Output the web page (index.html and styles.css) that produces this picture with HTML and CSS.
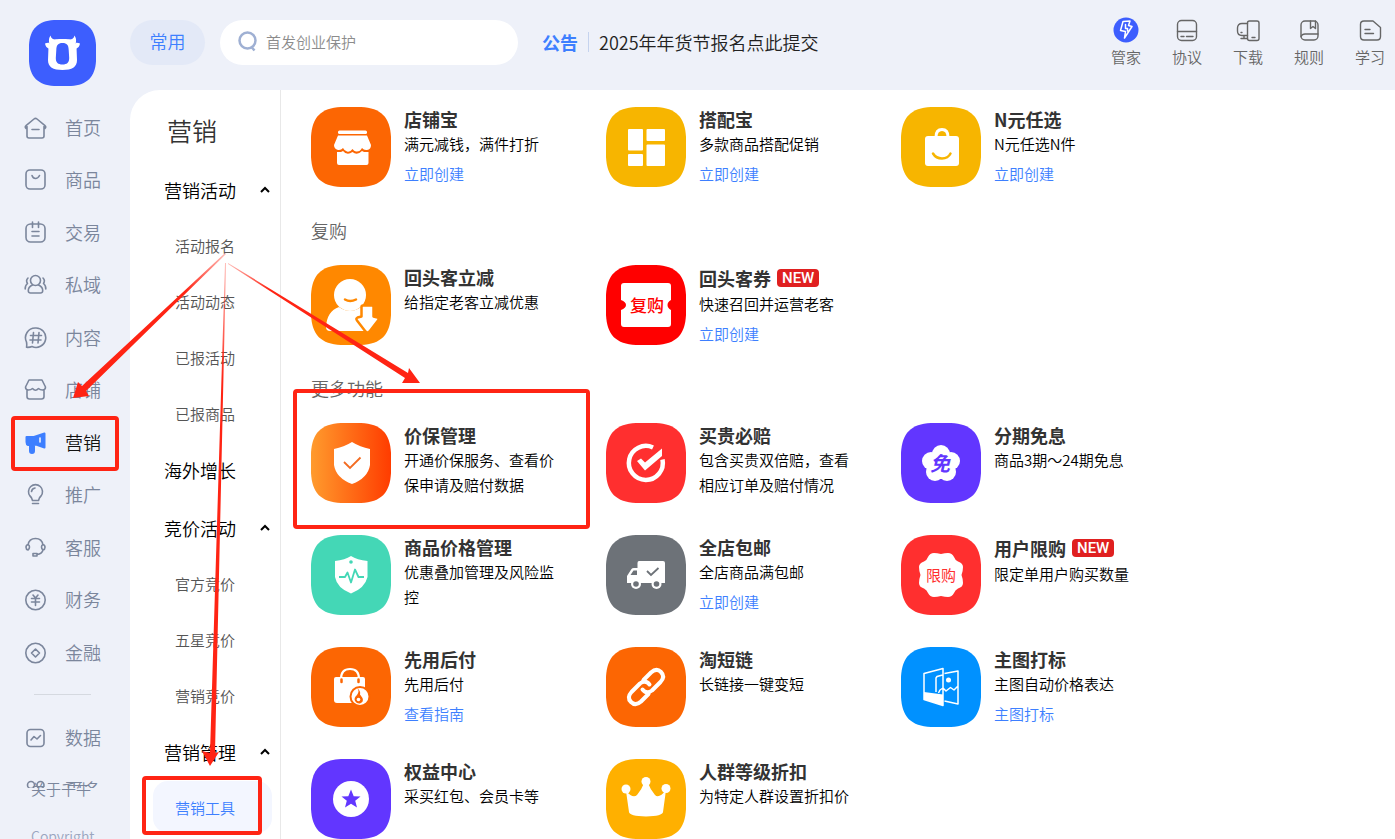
FILE: index.html
```html
<!DOCTYPE html>
<html lang="zh-CN">
<head>
<meta charset="utf-8">
<title>营销工具</title>
<link rel="stylesheet" href="styles.css">
</head>
<body>
<svg class="defs" aria-hidden="true">
  <symbol id="tile" viewBox="0 0 80 80"><path d="M30 0H50C70 1 79 10 80 30V50C79 70 70 79 50 80H30C10 79 1 70 0 50V30C1 10 10 1 30 0Z"/></symbol>
</svg>
<div class="app">
  <aside class="sidebar">
    <a class="logo" href="#" aria-label="千牛">
      <svg viewBox="0 0 67 66"><path fill="#3d5efe" d="M25 0H42C58 1 66 9 67 25V41C66 57 58 65 42 66H25C9 65 1 57 0 41V25C1 9 9 1 25 0Z"/><path fill="#fff" fill-rule="evenodd" d="M33.500 19C43 19 47 20.500 47.500 27L48 40C48 47 43 50 33.500 50S19 47 19 40L19.500 27C20 20.500 24 19 33.500 19ZM33.500 23C29 23 27.500 25 27.300 30L26.800 38C26.800 42.500 29 44.500 33.500 44.500S40.200 42.500 40.200 38L39.700 30C39.500 25 38 23 33.500 23Z"/><path fill="#fff" d="M21.500 15.500Q19 19.500 20.500 23.500L26 24L28 19.800Q22.500 20 21.500 15.500ZM45.500 15.500Q48 19.500 46.500 23.500L41 24L39 19.800Q44.500 20 45.500 15.500ZM16 23.500Q19 22 23 23.500L20.500 29Q16.500 27.500 16 23.500ZM51 23.500Q48 22 44 23.500L46.500 29Q50.500 27.500 51 23.500Z"/></svg>
    </a>
    <nav class="nav" aria-label="主导航">
      <ul class="nav-list">
        <li><a class="nav-item" href="#"><svg class="line-icon" viewBox="0 0 24 24"><path d="M3 10.500V20a2 2 0 0 0 2 2H18a2 2 0 0 0 2-2V10.500M2 12.500C1 11.500 1 10.500 2 9.700L10 3Q11.500 1.800 13 3L21 9.700C22 10.500 22 11.500 21 12.500M8 13.500H15"/></svg>首页</a></li>
        <li><a class="nav-item" href="#"><svg class="line-icon" viewBox="0 0 24 24"><rect x="2" y="2" width="19" height="19" rx="4"/><path d="M8 7.500Q9 10.500 11.500 10.500T15.500 7.500"/></svg>商品</a></li>
        <li><a class="nav-item" href="#"><svg class="line-icon" viewBox="0 0 24 24"><rect x="2" y="3" width="19" height="18" rx="4.500"/><path d="M8.500 1V6.500M14.500 1V6.500M8 10.500H15M8 15H15"/></svg>交易</a></li>
        <li><a class="nav-item" href="#"><svg class="line-icon" viewBox="0 0 24 24"><circle cx="11.500" cy="7.500" r="5"/><path d="M8.500 12Q4 14 4.300 18Q4.500 20 6.500 20H16.500Q18.500 20 18.700 18Q19 14 14.500 12M4 5Q1.500 7.500 3.500 10.500Q1 12.500 1.200 16M19 5Q21.500 7.500 19.500 10.500Q22 12.500 21.800 16"/></svg>私域</a></li>
        <li><a class="nav-item" href="#"><svg class="line-icon" viewBox="0 0 24 24"><path d="M11.500 2A9.700 9.700 0 1 1 8 20.500Q6 21.500 2.500 21.300Q3 19 2.500 16A9.700 9.700 0 0 1 11.500 2ZM9.500 6.500L8.500 17M15 6.500L14 17M6.500 9.500H17.500M6 14H17"/></svg>内容</a></li>
        <li><a class="nav-item" href="#"><svg class="line-icon" viewBox="0 0 24 24"><path d="M5 2H18L21.500 9Q21.500 12 18.500 12Q16 12 14.500 10.500Q11.500 14 8.500 10.500Q7 12 4.500 12Q1.500 12 1.500 9ZM3 12V18.500Q3 21 5.500 21H17.500Q20 21 20 18.500V12"/></svg>店铺</a></li>
        <li><a class="nav-item current" href="#" aria-current="page"><svg class="line-icon" viewBox="0 0 24 24"><path fill="#3d7fff" stroke="#3d7fff" stroke-width="2" d="M2.500 6H10L20.500 2.500V16.500L12 13.500L10 14V20Q10 22 8 22T6 20V14H4Q2.500 13.500 2.500 11Z"/><path stroke="#eef1f9" d="M16 7V11"/></svg>营销</a></li>
        <li><a class="nav-item" href="#"><svg class="line-icon" viewBox="0 0 24 24"><path d="M8.500 17.500Q8 14.500 6 13A7 7 0 1 1 17 13Q15 14.500 14.500 17.500ZM8.500 20.500H14.500M7.500 8.500Q8 5.500 11 5"/></svg>推广</a></li>
        <li><a class="nav-item" href="#"><svg class="line-icon" viewBox="0 0 24 24"><path d="M4 9Q5 2.500 11.500 2.500T19 9M4 8.500Q5.500 9 5.500 11T4 14Q2 13.500 2 11.200T4 8.500ZM19 8.500Q17.500 9 17.500 11T19 14Q21 13.500 21 11.200T19 8.500ZM19 14Q18 18 13 18.500M9 17.500H13V20H9Z"/></svg>客服</a></li>
        <li><a class="nav-item" href="#"><svg class="line-icon" viewBox="0 0 24 24"><circle cx="11.500" cy="12" r="9.700"/><path d="M9 7L11.500 10L14 7M7.500 10.500H15.500M7.500 14H15.500M11.500 10.500V17.500"/></svg>财务</a></li>
        <li><a class="nav-item" href="#"><svg class="line-icon" viewBox="0 0 24 24"><circle cx="11.500" cy="12" r="9.700"/><path d="M11.500 8L15.500 12L11.500 16L7.500 12Z"/></svg>金融</a></li>
      </ul>
      <hr class="nav-rule">
      <ul class="nav-extra">
        <li><a class="nav-item" href="#"><svg class="line-icon" viewBox="0 0 24 24"><rect x="3" y="3.500" width="17" height="17" rx="3.500"/><path d="M7 14L10 10.500L13 13L16.500 9.500"/></svg>数据</a></li>
        <li><a class="nav-item" href="#"><svg class="line-icon" viewBox="0 0 24 24"><circle cx="7" cy="7" r="3.500"/><circle cx="16.500" cy="7" r="3.500"/><circle cx="7" cy="17" r="3.500"/><circle cx="16.500" cy="17" r="3.500"/></svg>更多</a></li>
      </ul>
    </nav>
    <footer class="side-foot"><a href="#">关于千牛</a><small>Copyright</small></footer>
  </aside>

  <header class="topbar">
    <button class="common" type="button">常用</button>
    <label class="search">
      <svg viewBox="0 0 20 22"><circle cx="9.500" cy="9.500" r="8" fill="none" stroke="#9fb0d3" stroke-width="2.500"/><path d="M13 15.500L16.500 19.500" stroke="#9fb0d3" stroke-width="2.500"/></svg>
      <input type="search" placeholder="首发创业保护" aria-label="搜索">
    </label>
    <div class="notice"><strong>公告</strong><a href="#">2025年年货节报名点此提交</a></div>
    <nav class="tools" aria-label="快捷入口">
      <a href="#"><svg viewBox="0 0 26 26"><circle cx="13" cy="13" r="12.500" fill="#3d5efe"/><path fill="none" stroke="#fff" stroke-width="1.500" stroke-linejoin="round" d="M10 4.500L17 4L15.500 8.500L19 9.500L11.500 21L12.500 14.500L7.500 13.500ZM12.500 7.500V11.500H14.500V14"/></svg>管家</a>
      <a href="#"><svg viewBox="0 0 26 26"><rect x="3.500" y="3.500" width="19" height="20" rx="4"/><path d="M3.500 14.500H22.500M7 19.500H10M12.500 19.500H19"/></svg>协议</a>
      <a href="#"><svg viewBox="0 0 26 26"><path d="M12.500 6.500H7Q2.500 6.500 2.500 11V14Q2.500 18.500 7 18.500H12.500M6 21.500H12.500M9 18.500V21M6 15.500H7"/><rect x="12.500" y="4" width="11.500" height="19.500" rx="2"/><path d="M17 20.500H20"/></svg>下载</a>
      <a href="#"><svg viewBox="0 0 26 26"><rect x="5" y="4" width="17" height="19" rx="4"/><path d="M5 19.500Q6 17 9 17H22M14.500 4V11.500L17 9.500L19.500 11.500V4"/></svg>规则</a>
      <a href="#"><svg viewBox="0 0 26 26"><path d="M7 4H16L23.500 10.500V19.500Q23.500 23 20 23H7Q3.500 23 3.500 19.500V7.500Q3.500 4 7 4ZM8 12.500H13M8 16.500H16.500"/></svg>学习</a>
    </nav>
  </header>

  <div class="workspace">
    <nav class="submenu" aria-label="营销">
      <h1>营销</h1>
      <button class="group" type="button" aria-expanded="true">营销活动<svg viewBox="0 0 10 8"><path d="M1 6L5 2L9 6"/></svg></button>
      <ul>
        <li><a href="#">活动报名</a></li>
        <li><a href="#">活动动态</a></li>
        <li><a href="#">已报活动</a></li>
        <li><a href="#">已报商品</a></li>
      </ul>
      <a class="group" href="#">海外增长</a>
      <button class="group" type="button" aria-expanded="true">竞价活动<svg viewBox="0 0 10 8"><path d="M1 6L5 2L9 6"/></svg></button>
      <ul>
        <li><a href="#">官方竞价</a></li>
        <li><a href="#">五星竞价</a></li>
        <li><a href="#">营销竞价</a></li>
      </ul>
      <button class="group" type="button" aria-expanded="true">营销管理<svg viewBox="0 0 10 8"><path d="M1 6L5 2L9 6"/></svg></button>
      <ul>
        <li><a class="selected" href="#" aria-current="page">营销工具</a></li>
      </ul>
    </nav>

    <main class="content">
      <section class="cards">
        <article class="card">
          <svg class="tile" viewBox="0 0 80 80"><use href="#tile" fill="#fc6603"/><g fill="#fff"><rect x="27" y="23.500" width="29" height="3.500" rx="1.500"/><path d="M27 28.500H56L60 38Q60 42.500 56 43Q53 43.500 51 41Q49 45 45 44.500Q43 44 41.500 42Q39 45.500 36 44.500Q33.500 44 32 41Q30 43.500 27 43Q23 42 23 38Z"/><path d="M26 45H30L32 44Q36 49 41.500 45Q46 49 51 44L53 45H57.500V56Q57.500 58 55.500 58H28Q26 58 26 56Z"/></g></svg>
          <div class="copy"><h3>店铺宝</h3><p>满元减钱，满件打折</p><a href="#">立即创建</a></div>
        </article>
        <article class="card">
          <svg class="tile" viewBox="0 0 80 80"><use href="#tile" fill="#f7b500"/><g fill="#fff"><rect x="22" y="22" width="15" height="21.500" rx="1"/><rect x="40.500" y="22" width="18.500" height="12" rx="1"/><rect x="22" y="47" width="15" height="12" rx="1"/><rect x="40.500" y="37.500" width="18.500" height="21.500" rx="1"/></g></svg>
          <div class="copy"><h3>搭配宝</h3><p>多款商品搭配促销</p><a href="#">立即创建</a></div>
        </article>
        <article class="card">
          <svg class="tile" viewBox="0 0 80 80"><use href="#tile" fill="#f7b500"/><rect x="24" y="29" width="34" height="30" rx="3" fill="#fff"/><path fill="none" stroke="#fff" stroke-width="3" d="M35 30Q35 22.500 41 22.500T47 30"/><path fill="none" stroke="#f7b500" stroke-width="2.500" stroke-linecap="round" d="M32 46.500Q35 51.500 41 51.500T49.500 46.500"/></svg>
          <div class="copy"><h3>N元任选</h3><p>N元任选N件</p><a href="#">立即创建</a></div>
        </article>
      </section>

      <h2>复购</h2>
      <section class="cards">
        <article class="card">
          <svg class="tile" viewBox="0 0 80 80"><use href="#tile" fill="#ff8800"/><circle cx="39" cy="30" r="16" fill="#fff"/><path fill="#fff" d="M15 62Q16 46 28 42Q39 50 50 42L57 50V66H19Q15 66 15 62Z"/><path fill="none" stroke="#ff8800" stroke-width="2.500" stroke-linecap="round" d="M34 34.500Q39 37.500 45 34.500"/><path fill="#fff" stroke="#ff8800" stroke-width="2.500" stroke-linejoin="round" d="M52 40.500H61Q62.500 40.500 62.500 42V51.500L66.500 52.500Q68.500 53.500 67 55.500L58.500 66.500Q56.500 68.500 54.500 66.500L46 55.500Q44.500 53.500 46.500 52.500L50.500 51.500V42Q50.500 40.500 52 40.500Z"/></svg>
          <div class="copy"><h3>回头客立减</h3><p>给指定老客立减优惠</p></div>
        </article>
        <article class="card">
          <svg class="tile" viewBox="0 0 80 80"><use href="#tile" fill="#ff0000"/><path fill="#fff" d="M18 18H62Q65 18 65 21V35Q61.500 37 61.500 40T65 45V59Q65 62 62 62H18Q15 62 15 59V45Q20 43 20 40T15 35V21Q15 18 18 18Z"/><text class="tile-text big" x="41" y="47" fill="#ff0000">复购</text></svg>
          <div class="copy"><h3>回头客券<span class="badge">NEW</span></h3><p>快速召回并运营老客</p><a href="#">立即创建</a></div>
        </article>
      </section>

      <h2>更多功能</h2>
      <section class="cards">
        <article class="card">
          <svg class="tile" viewBox="0 0 80 80"><defs><linearGradient id="ember"><stop stop-color="#ff9b2d"/><stop offset="1" stop-color="#ff3c00"/></linearGradient></defs><use href="#tile" fill="url(#ember)"/><path fill="#fff" d="M41 19Q49 24 59 26V42Q57 55 41 61Q25 55 23 42V26Q33 24 41 19Z"/><path fill="none" stroke="#f36b21" stroke-width="1.800" d="M33 39L39 45L49.500 34.500"/></svg>
          <div class="copy"><h3>价保管理</h3><p>开通价保服务、查看价保申请及赔付数据</p></div>
        </article>
        <article class="card">
          <svg class="tile" viewBox="0 0 80 80"><use href="#tile" fill="#ff2f2f"/><path fill="none" stroke="#fff" stroke-width="4.500" d="M47 24.500A17 17 0 1 0 56.500 36.500"/><path fill="#fff" d="M31 38L35 35.500L39 39.500L56 25.500V33L39 47.500Z"/></svg>
          <div class="copy"><h3>买贵必赔</h3><p>包含买贵双倍赔，查看相应订单及赔付情况</p></div>
        </article>
        <article class="card">
          <svg class="tile" viewBox="0 0 80 80"><use href="#tile" fill="#6236ff"/><g fill="#fff"><circle cx="40" cy="31" r="9"/><circle cx="50" cy="38" r="9"/><circle cx="46" cy="49" r="9"/><circle cx="34" cy="49" r="9"/><circle cx="30" cy="38" r="9"/><circle cx="40" cy="41" r="9"/></g><text class="tile-text mian" x="39" y="48" fill="#6236ff">免</text></svg>
          <div class="copy"><h3>分期免息</h3><p>商品3期～24期免息</p></div>
        </article>
        <article class="card">
          <svg class="tile" viewBox="0 0 80 80"><use href="#tile" fill="#44d7b6"/><path fill="#fff" d="M40 21Q46 25 56.500 26V42Q54 53 40 58.500Q26 53 24 42V26Q34 25 40 21Z"/><circle cx="40" cy="27" r="1.800" fill="#44d7b6"/><path fill="none" stroke="#44d7b6" stroke-width="1.800" stroke-linejoin="round" d="M28 42H34L36.500 37.500L40 47.500L44 34.500L47.500 42H53"/></svg>
          <div class="copy"><h3>商品价格管理</h3><p>优惠叠加管理及风险监控</p></div>
        </article>
        <article class="card">
          <svg class="tile" viewBox="0 0 80 80"><use href="#tile" fill="#6d7278"/><path fill="#fff" d="M33 26H57Q59 26 59 28V48H21V41L25.500 34Q26 33 28 33H31.500V28Q31.500 26 33 26Z"/><path fill="#6d7278" d="M24.500 40L27.500 35.500H31V40Z"/><g fill="#fff"><circle cx="30" cy="49" r="5"/><circle cx="50.500" cy="49" r="5"/></g><g fill="#6d7278"><circle cx="30" cy="49" r="2.800"/><circle cx="50.500" cy="49" r="2.800"/></g><path fill="none" stroke="#6d7278" stroke-width="1.800" d="M41 36L45 40L52.500 33"/></svg>
          <div class="copy"><h3>全店包邮</h3><p>全店商品满包邮</p><a href="#">立即创建</a></div>
        </article>
        <article class="card">
          <svg class="tile" viewBox="0 0 80 80"><use href="#tile" fill="#ff2f2f"/><path fill="#fff" d="M33 18Q36 18 40 19Q44 18 47 18Q51 18 53 22Q54 25 57 26.500Q62 28 62 32Q62 36 60.500 40Q62 44 62 48Q62 52 57 53.500Q54 55 53 58Q51 62 47 62Q44 62 40 61Q36 62 33 62Q29 62 27 58Q26 55 23 53.500Q18 52 18 48Q18 44 19.500 40Q18 36 18 32Q18 28 23 26.500Q26 25 27 22Q29 18 33 18Z"/><text class="tile-text" x="40" y="46" fill="#ff2f2f">限购</text></svg>
          <div class="copy"><h3>用户限购<span class="badge">NEW</span></h3><p>限定单用户购买数量</p></div>
        </article>
        <article class="card">
          <svg class="tile" viewBox="0 0 80 80"><use href="#tile" fill="#fc6603"/><path fill="#fff" d="M25 30H52Q54 30 54 32V56H26Q23 56 23 53V32Q23 30 25 30Z"/><path fill="none" stroke="#fff" stroke-width="2.200" d="M30 32Q30 22 39 22T48 32"/><path stroke="#fc6603" stroke-width="2.500" stroke-linecap="round" d="M30.500 32.500V35M47.500 32.500V35"/><circle cx="49" cy="49.500" r="9.500" fill="#fff" stroke="#fc6603" stroke-width="2"/><path fill="#fc6603" d="M46 41Q49 44 46 48Q42.500 51 44 54Q46 57 49 56.500Q53 55 51.500 51L49 47.500Q50 44 46 41Z"/><circle cx="47.500" cy="52.500" r="1.800" fill="#fff"/></svg>
          <div class="copy"><h3>先用后付</h3><p>先用后付</p><a href="#">查看指南</a></div>
        </article>
        <article class="card">
          <svg class="tile" viewBox="0 0 80 80"><use href="#tile" fill="#fc6603"/><g fill="none" stroke="#fff" stroke-width="4" stroke-linecap="round" stroke-linejoin="round"><path d="M37.500 33L45 25.500Q50.500 20.500 55 25Q59.500 29.500 54.500 35L46 43.500Q40.500 47.500 36.500 42.500"/><path d="M42.500 47L35 54.500Q29.500 59.500 25 55Q20.500 50.500 25.500 45L34 36.500Q39.500 32.500 43.500 37.500"/></g></svg>
          <div class="copy"><h3>淘短链</h3><p>长链接一键变短</p></div>
        </article>
        <article class="card">
          <svg class="tile" viewBox="0 0 80 80"><use href="#tile" fill="#0091ff"/><g fill="none" stroke="#fff" stroke-width="1.500" stroke-linejoin="round"><path d="M23 26.500L42 21.500V58.500L23 52.500ZM43.500 26.500L57 24V57L43.500 54M35 45V31L36 29.500L41.500 28M37.500 46L39 43L42 41L45 44L49.500 40.500L53 43L57 39"/></g><path fill="#fff" d="M23 45L42 47.500V58.500L23 52.500Z"/><circle cx="47.500" cy="33" r="2.500" fill="#fff"/></svg>
          <div class="copy"><h3>主图打标</h3><p>主图自动价格表达</p><a href="#">主图打标</a></div>
        </article>
        <article class="card">
          <svg class="tile" viewBox="0 0 80 80"><use href="#tile" fill="#6236ff"/><circle cx="40" cy="40" r="18" fill="#fff"/><path fill="#6236ff" d="M40 30.500L42.700 37.200L49.500 37.500L44.200 41.800L46 48.500L40 44.800L34 48.500L35.800 41.800L30.500 37.500L37.300 37.200Z"/></svg>
          <div class="copy"><h3>权益中心</h3><p>采买红包、会员卡等</p></div>
        </article>
        <article class="card">
          <svg class="tile" viewBox="0 0 80 80"><use href="#tile" fill="#ffb000"/><g fill="#fff"><circle cx="20" cy="30" r="4.500"/><circle cx="40" cy="22.500" r="4.500"/><circle cx="60" cy="29.500" r="4.500"/><path d="M20 32Q27 40 31 36Q36 30 38 24H42Q44 30 49 36Q53 40 60 31L57 53Q56.500 57 40 57.500Q23.500 57 23 53Z"/></g></svg>
          <div class="copy"><h3>人群等级折扣</h3><p>为特定人群设置折扣价</p></div>
        </article>
      </section>
    </main>
  </div>
</div>

<svg class="marks" viewBox="0 0 1395 839" aria-hidden="true">
  <defs>
    <linearGradient id="fadeA" gradientUnits="userSpaceOnUse" x1="225" y1="253" x2="185" y2="291"><stop stop-color="#ff2414" stop-opacity=".3"/><stop offset="1" stop-color="#ff2414"/></linearGradient>
    <linearGradient id="fadeB" gradientUnits="userSpaceOnUse" x1="225" y1="263" x2="222" y2="380"><stop stop-color="#ff2414" stop-opacity=".3"/><stop offset="1" stop-color="#ff2414"/></linearGradient>
    <linearGradient id="fadeC" gradientUnits="userSpaceOnUse" x1="228" y1="264" x2="270" y2="290"><stop stop-color="#ff2414" stop-opacity=".3"/><stop offset="1" stop-color="#ff2414"/></linearGradient>
  </defs>
  <path fill="url(#fadeA)" d="M225 253L82 386L78 382L73 398L89 396L86 391L226 254Z"/>
  <path fill="url(#fadeB)" d="M225 263L210 753L202 751L210 766L219 752L215 753L226 263Z"/>
  <path fill="url(#fadeC)" d="M228 263L408 373L409 368L420 383L402 383L405 378L228 264Z"/>
  <g fill="none" stroke="#ff2414" stroke-width="4">
    <rect x="13" y="418" width="104" height="51" rx="2"/>
    <rect x="144" y="778" width="116" height="55" rx="2"/>
    <rect x="295" y="391" width="293" height="136" rx="2"/>
  </g>
</svg>
</body>
</html>
```
FILE: styles.css
```css
* { box-sizing: border-box; }
body {
  margin: 0;
  height: 100vh;
  overflow: hidden;
  background: #eef1f9;
  color: #000;
  font-family: "Noto Sans CJK SC", "Noto Sans", sans-serif;
  font-size: 15px;
  font-weight: 350;
}
ul { margin: 0; padding: 0; list-style: none; }
h1, h2, h3, p { margin: 0; }
a { color: inherit; text-decoration: none; }
button { border: 0; background: none; font: inherit; color: inherit; cursor: pointer; }
.defs { display: none; }

.app {
  display: grid;
  grid-template-columns: 130px 1fr;
  grid-template-rows: 90px 1fr;
  height: 100vh;
}

/* Sidebar */
.sidebar {
  grid-row: 1 / 3;
  display: flex;
  flex-direction: column;
  min-height: 0;
}
.logo { display: block; margin: 20px 0 15px 29px; height: 66px; }
.logo svg { display: block; width: 67px; height: 66px; }
.nav {
  flex: 1;
  min-height: 0;
  overflow: hidden;
  margin: 0 11px 0 6px;
}
.nav-list { display: grid; grid-auto-rows: 1fr; height: 577px; }
.nav-item {
  display: flex;
  align-items: center;
  gap: 17px;
  height: 52px;
  padding-left: 18px;
  color: #7b869c;
  font-size: 18px;
}
.nav-item.current { color: #111; }
.line-icon {
  width: 24px;
  height: 24px;
  margin-top: 2px;
  fill: none;
  stroke: #7b869c;
  stroke-width: 1.6;
  stroke-linecap: round;
  stroke-linejoin: round;
}
.nav-rule {
  width: 57px;
  height: 1px;
  margin: 16px 0 16px 28px;
  border: 0;
  background: #d5d9e0;
}
.side-foot {
  display: flex;
  flex-direction: column;
  gap: 25px;
  height: 61px;
  margin-top: -10px;
  padding-left: 31px;
  color: #7b869c;
  line-height: 22px;
}
.side-foot small { color: #9aa6c0; font-size: 14px; }

/* Top bar */
.topbar { display: flex; align-items: flex-start; padding: 20px 10px 0 0; }
.common {
  width: 75px;
  height: 45px;
  padding: 0 0 3px;
  border-radius: 23px;
  background: #e3e9f7;
  color: #3d7fff;
  font-size: 18px;
}
.search {
  display: flex;
  align-items: center;
  gap: 8px;
  width: 298px;
  height: 45px;
  margin-left: 15px;
  padding: 0 18px 2px;
  border-radius: 23px;
  background: #fff;
}
.search svg { flex: none; width: 20px; height: 22px; }
.search input {
  flex: 1;
  min-width: 0;
  padding: 0;
  border: 0;
  outline: 0;
  background: none;
  font: inherit;
}
.search input::placeholder { color: #8c8c8c; }
.notice {
  display: flex;
  align-items: center;
  height: 43px;
  margin-left: 24px;
  font-size: 18px;
  color: #222;
}
.notice strong { color: #3d7fff; font-weight: 700; line-height: 20px; }
.notice a { margin-left: 10px; padding-left: 10px; border-left: 1px solid #c5d3ee; line-height: 20px; }
.tools { display: flex; gap: 31px; margin-left: auto; margin-top: -3px; }
.tools a {
  display: flex;
  flex-direction: column;
  align-items: center;
  gap: 3px;
  color: #666;
  line-height: 22px;
}
.tools svg {
  width: 26px;
  height: 26px;
  fill: none;
  stroke: #666;
  stroke-width: 1.4;
  stroke-linecap: round;
  stroke-linejoin: round;
}
.tools circle { stroke: none; }

/* Workspace */
.workspace {
  display: grid;
  grid-template-columns: 151px 1fr;
  min-height: 0;
  overflow: hidden;
  border-top-left-radius: 30px;
  background: #fff;
}
.submenu { border-right: 1px solid #e8e8e8; }
.submenu h1 {
  padding: 22px 0 15px 37px;
  color: #333;
  font-size: 25px;
  font-weight: 350;
  line-height: 36px;
}
.group {
  display: flex;
  align-items: center;
  justify-content: space-between;
  width: 100%;
  height: 54px;
  margin-bottom: 4px;
  padding: 0 10px 0 34px;
  font-size: 18px;
}
.group svg { width: 10px; height: 8px; fill: none; stroke: #000; stroke-width: 2; }
.submenu ul { margin: -4px 0 4px; }
.submenu li a {
  display: flex;
  align-items: center;
  height: 52px;
  margin: 0 8px 4px 23px;
  padding-left: 22px;
  border-radius: 15px;
  color: #555;
}
.submenu li:first-child { padding-top: 2px; }
.submenu li:last-child a { margin-bottom: 2px; }
.submenu li .selected { background: #f3f6ff; color: #3d7fff; }

.content { padding: 17px 30px 0; overflow: hidden; }
.content h2 {
  margin: 30px 0 22px;
  color: #666;
  font-size: 18px;
  font-weight: 350;
  line-height: 26px;
}
.cards {
  display: grid;
  grid-template-columns: repeat(auto-fill, 295px);
  grid-auto-rows: 80px;
  row-gap: 32px;
}
.card { display: flex; gap: 13px; }
.tile { flex: none; width: 80px; height: 80px; }
.tile-text {
  font-size: 15px;
  font-weight: 400;
  text-anchor: middle;
}
.tile-text.big { font-size: 17px; font-weight: 500; }
.tile-text.mian { font-size: 20px; font-weight: 700; font-style: italic; }
.copy { max-width: 160px; line-height: 25px; }
.copy h3 {
  display: flex;
  align-items: center;
  color: #333;
  font-size: 18px;
  font-weight: 700;
  line-height: 24px;
}
.copy h3:has(.badge) { line-height: 26px; }
.copy > a { display: block; margin-top: 5px; color: #3d7fff; }
.badge {
  height: 18px;
  margin-left: 6px;
  padding: 0 5px;
  border-radius: 4px;
  background: #e02020;
  color: #fff;
  font-family: Roboto, sans-serif;
  font-size: 15px;
  font-weight: 500;
  line-height: 18px;
}

/* Tutorial overlay */
.marks {
  position: absolute;
  top: 0;
  left: 0;
  width: 1395px;
  height: 839px;
  pointer-events: none;
}
```
